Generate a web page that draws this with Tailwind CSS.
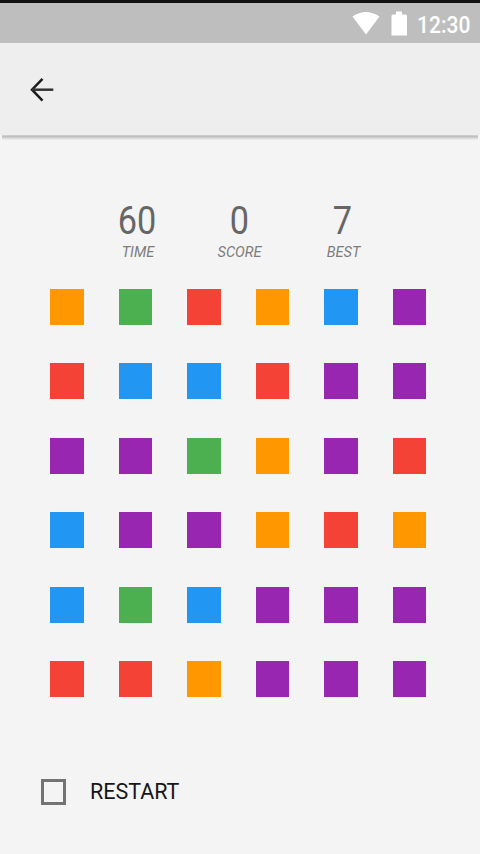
<!DOCTYPE html>
<html lang="en">
<head>
<meta charset="utf-8">
<title>Squares</title>
<script src="https://cdn.jsdelivr.net/npm/@tailwindcss/browser@4"></script>
</head>
<body class="bg-[#f4f4f4] font-[Roboto,sans-serif] overflow-hidden">
<div class="w-[480px] h-[854px] flex flex-col">
  <div class="h-[3px] bg-[#111111] shrink-0"></div>
  <div class="h-10 bg-[#bebebe] shrink-0 flex items-start justify-end text-white">
    <svg class="w-[28px] h-[24px] mt-2 mr-[11px]" viewBox="0 0 28 24" fill="currentColor"><path d="M0.500 5.500Q14-3.500 27.500 5.500L14 23.500Z"/></svg>
    <svg class="w-[16px] h-[25px] mt-2 mr-[10px]" viewBox="0 0 16 25" fill="currentColor"><path d="M5 0.500h6v3h3.500q1.500 0 1.500 1.500V24.500H0.500V5Q0.500 3.500 2 3.500H5Z"/></svg>
    <div class="w-[63px] text-[23.500px] leading-[28px] mt-2 whitespace-nowrap"><span class="inline-block origin-left scale-x-[.895] font-medium">12:30</span></div>
  </div>
  <header class="h-[92px] bg-[#eeeeee] shrink-0 pl-[29px] pt-[33px]">
    <svg class="w-[26px] h-[28px]" viewBox="0 0 26 28" fill="none" stroke="#1c1c1c" stroke-width="2.500"><path d="M13.500 2.800L3 13.700L13.500 24.600"/><path d="M3 13.700H24.300" stroke="#333333"/></svg>
  </header>
  <div class="h-[5px] mx-[2px] shrink-0 bg-linear-to-b from-[#d4d4d4] via-[#bfbfbf] via-30% to-[#f4f4f4]"></div>

  <section class="mt-[60px] ml-[85px] w-[309px] grid grid-cols-3 text-center">
    <div><div class="text-[38.500px] leading-[42px] text-[#666666] scale-x-[.89] translate-x-[.500px]">60</div><div class="text-[15px] leading-[20px] italic text-[#7c7c7c] scale-x-[.97] translate-x-[1.500px]">TIME</div></div>
    <div><div class="text-[38.500px] leading-[42px] text-[#666666] scale-x-[.89]">0</div><div class="text-[15px] leading-[20px] italic text-[#7c7c7c] scale-x-[.97]">SCORE</div></div>
    <div><div class="text-[38.500px] leading-[42px] text-[#666666] scale-x-[.89]">7</div><div class="text-[15px] leading-[20px] italic text-[#7c7c7c] scale-x-[.97] translate-x-px">BEST</div></div>
  </section>

  <main id="board" class="mt-[26.800px] ml-[50px] grid grid-cols-[repeat(6,33.500px)] auto-rows-[36px] gap-x-[35.100px] gap-y-[38.500px]"></main>

  <label class="mt-[81.200px] ml-[41px] flex items-center h-[28px]">
    <span class="w-[25px] h-[26px] border-[3px] border-[#737373]"></span>
    <span class="ml-[24px] text-[22.500px] leading-[28px] text-[#161616] origin-left scale-x-[.955] -translate-y-px">RESTART</span>
  </label>
</div>
<script>
const colors = {
  o: 'bg-[#ff9800]',
  g: 'bg-[#4caf50]',
  r: 'bg-[#f44336]',
  b: 'bg-[#2196f3]',
  p: 'bg-[#9926b0]'
};
const rows = ['ogrobp', 'rbbrpp', 'ppgopr', 'bpporo', 'bgbppp', 'rroppp'];
document.getElementById('board').innerHTML =
  [...rows.join('')].map(c => `<div class="${colors[c]}"></div>`).join('');
</script>
</body>
</html>
